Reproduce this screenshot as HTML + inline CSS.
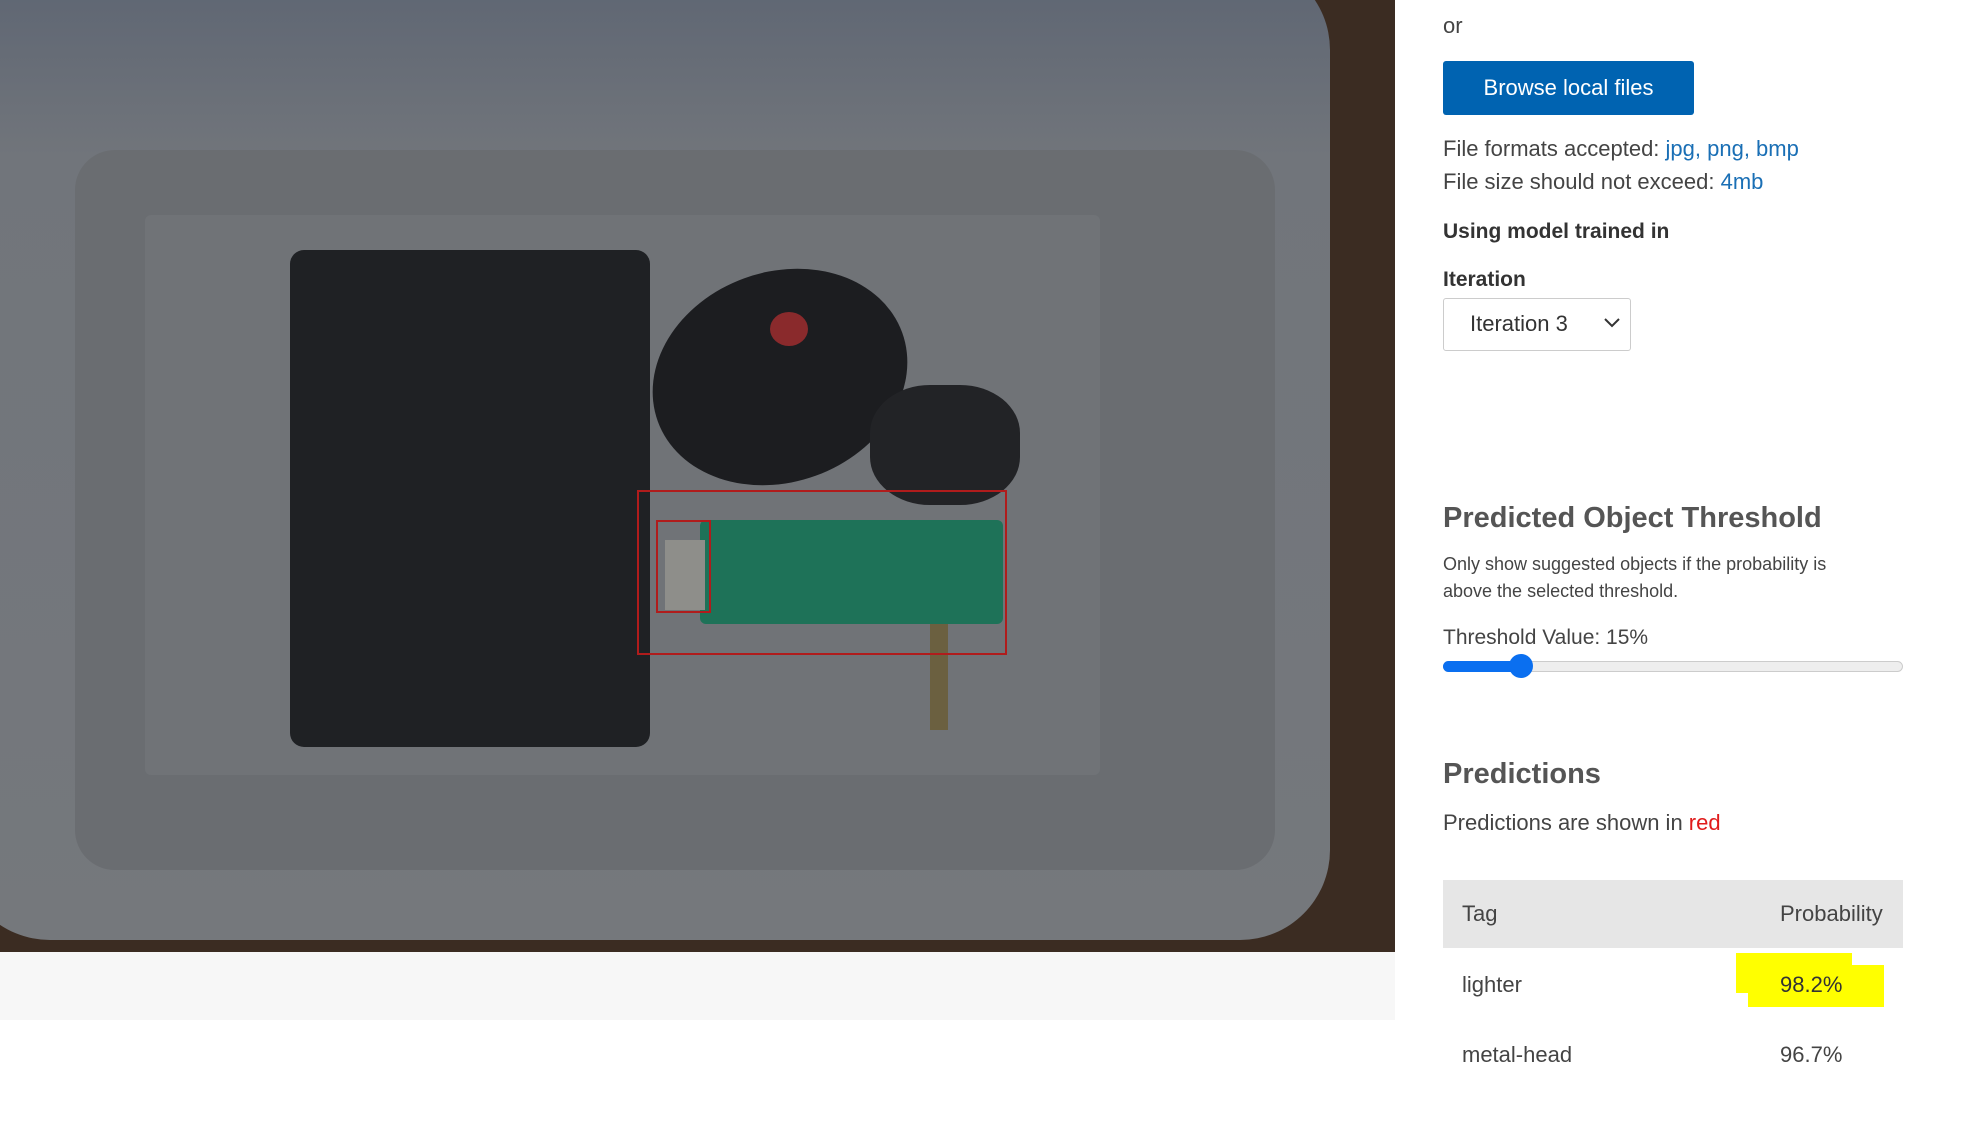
<!DOCTYPE html>
<html><head><meta charset="utf-8"><style>
*{margin:0;padding:0;box-sizing:border-box}
body{width:1980px;height:1130px;background:#fff;font-family:"Segoe UI","Liberation Sans",sans-serif;color:#333;position:relative;overflow:hidden}
.a{position:absolute}
.t{position:absolute;white-space:nowrap;line-height:1}
</style></head><body>
<div class="a" style="left:0;top:0;width:1395px;height:952px;background:#3b2c22;overflow:hidden">
 <div class="a" style="left:-40px;top:-40px;width:1370px;height:980px;border-radius:90px;background:linear-gradient(180deg,#5c6472 0%,#71757b 20%,#75787c 100%)"></div>
 <div class="a" style="left:75px;top:150px;width:1200px;height:720px;border-radius:40px;background:#6a6d71"></div>
 <div class="a" style="left:145px;top:215px;width:955px;height:560px;border-radius:6px;background:#707377"></div>
 <div class="a" style="left:290px;top:250px;width:360px;height:497px;border-radius:14px;background:#1f2124"></div>
 <div class="a" style="left:650px;top:272px;width:260px;height:210px;border-radius:50%;background:#1c1d20;transform:rotate(-20deg)"></div>
 <div class="a" style="left:770px;top:312px;width:38px;height:34px;border-radius:50%;background:#8a2a2c"></div>
 <div class="a" style="left:870px;top:385px;width:150px;height:120px;border-radius:40%;background:#222326"></div>
 <div class="a" style="left:930px;top:600px;width:18px;height:130px;background:#6b6040"></div>
 <div class="a" style="left:700px;top:520px;width:303px;height:104px;border-radius:6px;background:#1e7258"></div>
 <div class="a" style="left:665px;top:540px;width:40px;height:70px;background:#8e8e8a"></div>
 <div class="a" style="left:637px;top:490px;width:370px;height:165px;border:2px solid #b01c1c"></div>
 <div class="a" style="left:656px;top:520px;width:55px;height:93px;border:2px solid #b01c1c"></div>
</div>
<div class="a" style="left:0;top:952px;width:1395px;height:68px;background:#f7f7f7"></div>

<div class="t" style="left:1443px;top:15px;font-size:22px;color:#444">or</div>
<div class="a" style="left:1443px;top:61px;width:251px;height:54px;background:#0063b1;border-radius:3px;color:#fff;font-size:22px;line-height:54px;text-align:center">Browse local files</div>
<div class="t" style="left:1443px;top:138px;font-size:22px;color:#444">File formats accepted: <span style="color:#1a6fb5">jpg, png, bmp</span></div>
<div class="t" style="left:1443px;top:171px;font-size:22px;color:#444">File size should not exceed: <span style="color:#1a6fb5">4mb</span></div>
<div class="t" style="left:1443px;top:221px;font-size:21px;font-weight:bold;color:#333">Using model trained in</div>
<div class="t" style="left:1443px;top:269px;font-size:21px;font-weight:bold;color:#333">Iteration</div>
<div class="a" style="left:1443px;top:298px;width:188px;height:53px;border:1px solid #ccc;border-radius:3px"></div>
<div class="t" style="left:1470px;top:313px;font-size:22px;color:#333">Iteration 3</div>
<svg class="a" style="left:1603px;top:317px" width="18" height="12"><path d="M2 2 L9 9 L16 2" fill="none" stroke="#333" stroke-width="2"/></svg>

<div class="t" style="left:1443px;top:504px;font-size:29px;font-weight:bold;color:#555">Predicted Object Threshold</div>
<div class="t" style="left:1443px;top:555px;font-size:18px;color:#444">Only show suggested objects if the probability is</div>
<div class="t" style="left:1443px;top:582px;font-size:18px;color:#444">above the selected threshold.</div>
<div class="t" style="left:1443px;top:627px;font-size:21px;color:#444">Threshold Value: 15%</div>
<div class="a" style="left:1443px;top:661px;width:460px;height:11px;border-radius:6px;background:#eee;border:1px solid #ccc"></div>
<div class="a" style="left:1443px;top:661px;width:80px;height:11px;border-radius:6px;background:#0a6ff0"></div>
<div class="a" style="left:1509px;top:654px;width:24px;height:24px;border-radius:50%;background:#0a6ff0"></div>

<div class="t" style="left:1443px;top:760px;font-size:29px;font-weight:bold;color:#555">Predictions</div>
<div class="t" style="left:1443px;top:812px;font-size:22px;color:#444">Predictions are shown in <span style="color:#e01b1b">red</span></div>
<div class="a" style="left:1443px;top:880px;width:460px;height:68px;background:#e6e6e6"></div>
<div class="t" style="left:1462px;top:903px;font-size:22px;color:#444">Tag</div>
<div class="t" style="left:1780px;top:903px;font-size:22px;color:#444">Probability</div>
<div class="a" style="left:1736px;top:953px;width:116px;height:40px;background:#ffff00"></div>
<div class="a" style="left:1748px;top:965px;width:136px;height:42px;background:#ffff00"></div>
<div class="t" style="left:1462px;top:974px;font-size:22px;color:#444">lighter</div>
<div class="t" style="left:1780px;top:974px;font-size:22px;color:#333">98.2%</div>
<div class="t" style="left:1462px;top:1044px;font-size:22px;color:#444">metal-head</div>
<div class="t" style="left:1780px;top:1044px;font-size:22px;color:#444">96.7%</div>
</body></html>
